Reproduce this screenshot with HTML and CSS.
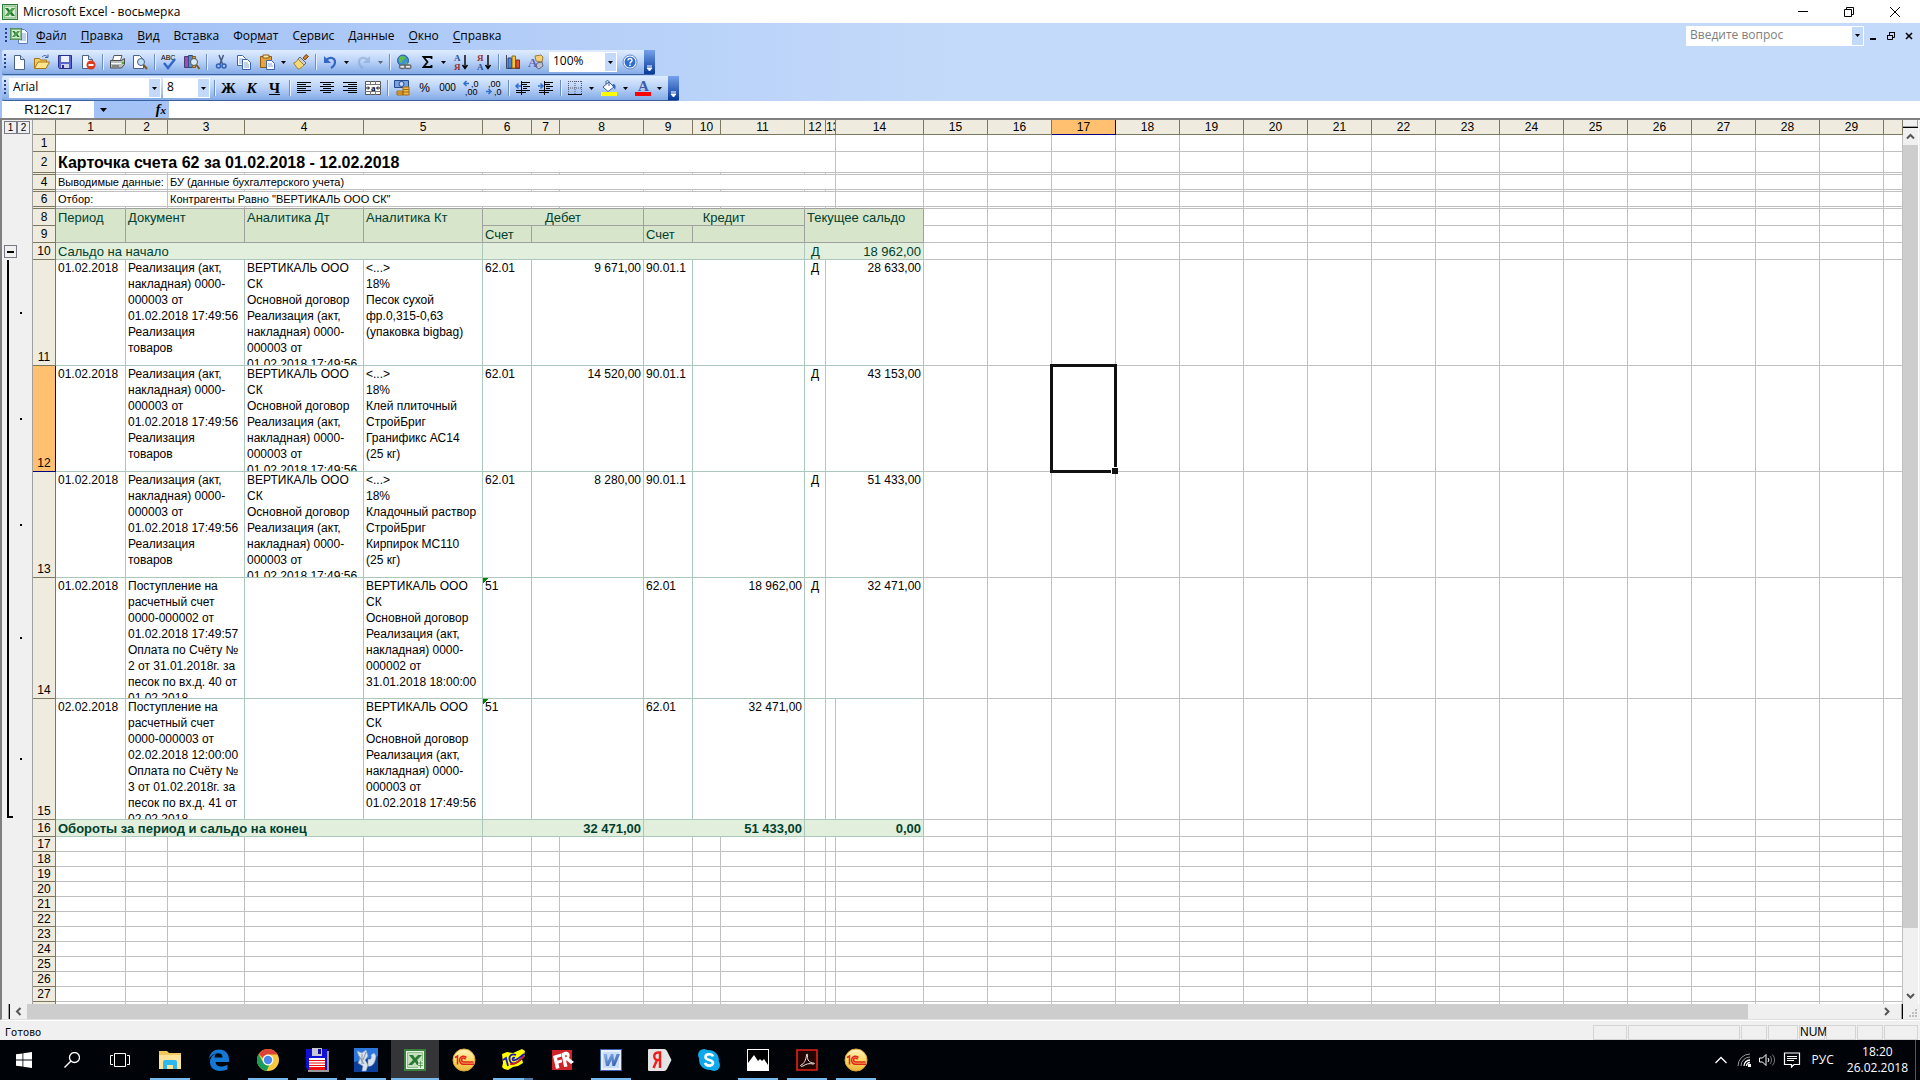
FILE: index.html
```html
<!DOCTYPE html>
<html lang="ru">
<head>
<meta charset="utf-8">
<title>Microsoft Excel - восьмерка</title>
<link rel="stylesheet" href="styles.css">
</head>
<body>
<svg class="defs" aria-hidden="true">
  <defs>
    <linearGradient id="gold" x1="0" y1="0" x2="0" y2="1"><stop offset="0" stop-color="#fff3c0"/><stop offset=".55" stop-color="#fbd75e"/><stop offset="1" stop-color="#e8b43a"/></linearGradient>
    <linearGradient id="blue" x1="0" y1="0" x2="1" y2="1"><stop offset="0" stop-color="#8db6ee"/><stop offset="1" stop-color="#234fa5"/></linearGradient>
    <symbol id="xl" viewBox="0 0 16 16"><rect x=".5" y=".5" width="15" height="15" fill="#f4faf2" stroke="#2c7a38"/><rect x="2" y="2" width="12" height="12" fill="#d5ecd0" stroke="#6aa766"/><path d="M3 4h3l2 2.500 2-2.500h3L9.800 8l3.200 4h-3.200L8 9.700 6.200 12H3l3.200-4z" fill="#1d7a2d"/><path d="M10 4h3L6.200 12H3z" fill="#55a352"/></symbol>
    <symbol id="tri" viewBox="0 0 5 3"><path d="M0 0h5L2.500 3z" fill="currentColor"/></symbol>
    <symbol id="onec" viewBox="0 0 24 24"><circle cx="12" cy="12" r="11" fill="url(#gold)" stroke="#e2a93c"/><path d="M3 9.500 5.500 8v8.500M14.500 9.500a4 4 0 1 0-2.500 6.700h10M13.500 11.500a2 2 0 1 0-2 2.500h10" fill="none" stroke="#e0231c" stroke-width="1.500"/></symbol>
  </defs>
</svg>

<header class="titlebar">
  <svg class="i16" viewBox="0 0 16 16"><use href="#xl"/></svg>
  <h1>Microsoft Excel - восьмерка</h1>
  <div class="winbtns">
    <button aria-label="Свернуть"><svg viewBox="0 0 12 12"><path d="M1 5.500h10" stroke="#000"/></svg></button>
    <button aria-label="Восстановить"><svg viewBox="0 0 12 12"><path d="M1.500 3.500h7v7h-7zM3.500 3.500v-2h7v7h-2" fill="none" stroke="#000"/></svg></button>
    <button aria-label="Закрыть"><svg viewBox="0 0 12 12"><path d="M1 1l10 10M11 1 1 11" stroke="#000"/></svg></button>
  </div>
</header>

<div class="chrome">
  <nav class="menubar">
    <i class="grip"></i>
    <svg class="book" viewBox="0 0 18 16"><path d="M8.500 1.500h6l3 3v11h-9z" fill="#f6f9ff" stroke="#5b7fc0"/><path d="M10 6h6M10 8h6M10 10h6M10 12h6" stroke="#86a6db"/><use href="#xl" x="0" y="0" width="12" height="12"/></svg>
    <a href="#"><u>Ф</u>айл</a><a href="#"><u>П</u>равка</a><a href="#"><u>В</u>ид</a><a href="#">Вст<u>а</u>вка</a><a href="#">Фор<u>м</u>ат</a><a href="#">С<u>е</u>рвис</a><a href="#"><u>Д</u>анные</a><a href="#"><u>О</u>кно</a><a href="#"><u>С</u>правка</a>
    <div class="ask combo"><input aria-label="Введите вопрос" placeholder="Введите вопрос"><button aria-label="Список вопросов"><svg class="tri"><use href="#tri"/></svg></button></div>
    <div class="mdi">
      <button aria-label="Свернуть книгу"><svg viewBox="0 0 10 10"><path d="M2 8h6" stroke="#000" stroke-width="2"/></svg></button>
      <button aria-label="Восстановить книгу"><svg viewBox="0 0 10 10"><path d="M1.500 4.500h5v4h-5zM1 4.500h6M3.500 4V1.500h5v5H7M3 1.500h6" fill="none" stroke="#000"/></svg></button>
      <button aria-label="Закрыть книгу"><svg viewBox="0 0 10 10"><path d="M2 2l6 6M8 2 2 8" stroke="#000" stroke-width="1.600"/></svg></button>
    </div>
  </nav>

  <div class="toolbar">
    <i class="grip"></i>
    <button class="tb" aria-label="Создать"><svg viewBox="0 0 16 16"><path d="M3.500 1.500h6l4 4v10h-10z" fill="#fff" stroke="#4a6285"/><path d="M9.500 1.500v4h4" fill="#cfdcf0" stroke="#4a6285"/></svg></button>
    <button class="tb" aria-label="Открыть"><svg viewBox="0 0 16 16"><path d="M.5 14V4.500h5l1 1.500h6v3" fill="#f6cf61" stroke="#a8741a"/><path d="M.5 14.500 4 8h11.500L12 14.500z" fill="#ffe48f" stroke="#a8741a"/><path d="M8 3c2-2 4-2 5.500 0M14 .5v3h-3" fill="none" stroke="#3a5fa8"/></svg></button>
    <button class="tb" aria-label="Сохранить"><svg viewBox="0 0 16 16"><path d="M1.500 1.500h13v13h-12l-1-1z" fill="#5a63cf" stroke="#2a2f8c"/><path d="M4 2h8v6H4z" fill="#eef2ff"/><path d="M4 10h8v4H4z" fill="#cdd3ee"/><path d="M5 11h2v3H5z" fill="#2a2f8c"/></svg></button>
    <button class="tb" aria-label="Разрешения"><svg viewBox="0 0 16 16"><path d="M2.500 1.500h6l4 4v9h-10z" fill="#fff" stroke="#4a6285"/><path d="M8.500 1.500v4h4" fill="#cfdcf0" stroke="#4a6285"/><circle cx="11" cy="11" r="4.500" fill="#dd3a1c"/><path d="M8.500 11h5" stroke="#fff" stroke-width="2"/></svg></button>
    <i class="sep"></i>
    <button class="tb" aria-label="Печать"><svg viewBox="0 0 16 16"><path d="M5 1.500h8l-1.500 5h-8z" fill="#fff" stroke="#555"/><path d="M1.500 6.500h11l3-2v6l-3 3.500h-11z" fill="#b9bfbc" stroke="#4c4c4c"/><path d="M2 9.500h10" stroke="#fff"/><path d="M3 12h7" stroke="#4c4c4c"/><path d="M13 8h2v2h-2z" fill="#4cae3c"/></svg></button>
    <button class="tb" aria-label="Просмотр"><svg viewBox="0 0 16 16"><path d="M1.500 1.500h6l4 4v9h-10z" fill="#fff" stroke="#4a6285"/><circle cx="9" cy="8" r="3.500" fill="#bfe0f5" stroke="#4a6285"/><path d="M11.500 11l3.500 4" stroke="#7a5a2a" stroke-width="2"/></svg></button>
    <i class="sep"></i>
    <button class="tb" aria-label="Орфография"><svg viewBox="0 0 16 16"><text x="0" y="6" font-size="7" class="svgt">ABC</text><path d="M3 9l4 5 7-9" fill="none" stroke="#3465c8" stroke-width="2.400"/></svg></button>
    <button class="tb" aria-label="Справочные материалы"><svg viewBox="0 0 16 16"><path d="M.5 2.500h4v11h-4z" fill="#a24bb4" stroke="#4b3a74"/><path d="M4.500 1.500h4v12h-4z" fill="#4e8fd0" stroke="#2c4a84"/><path d="M8.500 2.500h3v11h-3z" fill="#e2a534" stroke="#845a1c"/><circle cx="10" cy="8" r="3.500" fill="#d8edf9" stroke="#555"/><path d="M12.500 11l3 4" stroke="#7a5a2a" stroke-width="2"/></svg></button>
    <i class="sep"></i>
    <button class="tb" aria-label="Вырезать"><svg viewBox="0 0 16 16"><path d="M6 1l3.500 9M10.500 1 7 10" stroke="#45587c" stroke-width="1.500"/><circle cx="5.500" cy="12" r="2" fill="none" stroke="#2f5fb8" stroke-width="1.500"/><circle cx="11" cy="12" r="2" fill="none" stroke="#2f5fb8" stroke-width="1.500"/></svg></button>
    <button class="tb" aria-label="Копировать"><svg viewBox="0 0 16 16"><path d="M1.500 1.500h5l3 3v7h-8z" fill="#fff" stroke="#3b62ae"/><path d="M3 5h4M3 7h4M3 9h4" stroke="#86a6db"/><path d="M6.500 5.500h5l3 3v7h-8z" fill="#fff" stroke="#3b62ae"/><path d="M8 9h4M8 11h5M8 13h5" stroke="#86a6db"/></svg></button>
    <button class="tb" aria-label="Вставить"><svg viewBox="0 0 16 16"><path d="M1.500 2.500h11v11h-11z" fill="#e8a33a" stroke="#8d5a16"/><path d="M4 1h6v3H4z" fill="#fbe9a8" stroke="#8d5a16"/><path d="M7.500 6.500h5l3 3v6h-8z" fill="#fff" stroke="#3b62ae"/><path d="M9 10h4M9 12h5" stroke="#86a6db"/></svg></button>
    <button class="drop" aria-label="Параметры вставки"><svg class="tri"><use href="#tri"/></svg></button>
    <button class="tb" aria-label="Формат по образцу"><svg viewBox="0 0 16 16"><path d="M10 4l3-3.500 2.500 2L12 6z" fill="#d07c2a" stroke="#7a4a16"/><path d="M7 3l6 6-2 2-6-6z" fill="#c9cdd6" stroke="#666"/><path d="M5 5l6 6c-2 2-4 4-6 4L.5 9C3 8.500 4 7 5 5z" fill="#f5d878" stroke="#a5802e"/></svg></button>
    <i class="sep"></i>
    <button class="tb" aria-label="Отменить"><svg viewBox="0 0 16 16"><path d="M4 6c4-4 9-2 9 2 0 3-1.500 4.500-4 6" fill="none" stroke="#3465c8" stroke-width="2.200"/><path d="M2 2v7h7z" fill="#3465c8"/></svg></button>
    <button class="drop" aria-label="Список отмены"><svg class="tri"><use href="#tri"/></svg></button>
    <button class="tb dim" aria-label="Вернуть"><svg viewBox="0 0 16 16"><path d="M12 6c-4-4-9-2-9 2 0 3 1.500 4.500 4 6" fill="none" stroke="#7f9ccb" stroke-width="2.200"/><path d="M14 2v7H7z" fill="#7f9ccb"/></svg></button>
    <button class="drop dim" aria-label="Список возврата"><svg class="tri"><use href="#tri"/></svg></button>
    <i class="sep"></i>
    <button class="tb" aria-label="Гиперссылка"><svg viewBox="0 0 16 16"><circle cx="7" cy="6.500" r="5.500" fill="#3f8fd8" stroke="#2a5d9c"/><path d="M3 4c2-3 6-2 6 0S6 6 6 8s-2 1-3-1z" fill="#5fbf3f"/><path d="M9 8l3 1-2 3z" fill="#5fbf3f"/><rect x="3.500" y="11" width="6" height="3.500" rx="1.700" fill="#dfe6ee" stroke="#666" stroke-width="1.400"/><rect x="9" y="11" width="6" height="3.500" rx="1.700" fill="#dfe6ee" stroke="#666" stroke-width="1.400"/></svg></button>
    <button class="tb" aria-label="Автосумма"><svg viewBox="0 0 16 16"><path d="M12.500 5V3H4.500l4 5-4 5h8v-2" fill="none" stroke="#000" stroke-width="1.800"/></svg></button>
    <button class="drop" aria-label="Функции"><svg class="tri"><use href="#tri"/></svg></button>
    <button class="tb" aria-label="Сортировка по возрастанию"><svg viewBox="0 0 16 16"><text x="1" y="7" font-size="9" class="svgb" fill="#2f4f9c">А</text><text x="1" y="16" font-size="9" class="svgb" fill="#9c2f2f">Я</text><path d="M12 1v13M9.500 11l2.500 3.500 2.500-3.500" fill="none" stroke="#000" stroke-width="1.400"/></svg></button>
    <button class="tb" aria-label="Сортировка по убыванию"><svg viewBox="0 0 16 16"><text x="1" y="7" font-size="9" class="svgb" fill="#9c2f2f">Я</text><text x="1" y="16" font-size="9" class="svgb" fill="#2f4f9c">А</text><path d="M12 1v13M9.500 11l2.500 3.500 2.500-3.500" fill="none" stroke="#000" stroke-width="1.400"/></svg></button>
    <i class="sep"></i>
    <button class="tb" aria-label="Диаграмма"><svg viewBox="0 0 16 16"><path d="M1.500 1v13.500H15" fill="none" stroke="#445"/><path d="M3 4h3.500v10H3z" fill="#4f86d8" stroke="#234a8c"/><path d="M7 2h3.500v12H7z" fill="#f5c63c" stroke="#8d6a16"/><path d="M11 6h3.500v8H11z" fill="#e0562c" stroke="#8c2a16"/></svg></button>
    <button class="tb" aria-label="Рисование"><svg viewBox="0 0 16 16"><path d="M7 2l6-1 2 2-1 5-6-1z" fill="#f3cf79" stroke="#9c7a34"/><path d="M9 9l5-1 1 4-4 3-3-2z" fill="#b9c3d4" stroke="#667"/><text x="0" y="13" font-size="13" class="svgb" fill="#5e62b8">A</text></svg></button>
    <div class="combo zoom"><input aria-label="Масштаб" value="100%"><button aria-label="Выбор масштаба"><svg class="tri"><use href="#tri"/></svg></button></div>
    <button class="tb" aria-label="Справка"><svg viewBox="0 0 16 16"><circle cx="8" cy="8" r="7" fill="#fff" stroke="#5d88cc"/><circle cx="8" cy="8" r="5.500" fill="#2f6fd2"/><path d="M6 6.500c0-3 4.200-2.500 4 0C9.900 8 8 7.800 8 9.500M8 10.500V12" fill="none" stroke="#fff" stroke-width="1.500"/></svg></button>
    <button class="cap" aria-label="Параметры панели"><svg viewBox="0 0 7 7"><path d="M1 1h5M1 3h5L3.500 6z" stroke="#fff" fill="#fff"/></svg></button>
  </div>

  <div class="toolbar">
    <i class="grip"></i>
    <div class="combo font"><input aria-label="Шрифт" value="Arial"><button aria-label="Выбор шрифта"><svg class="tri"><use href="#tri"/></svg></button></div>
    <div class="combo size"><input aria-label="Размер" value="8"><button aria-label="Выбор размера"><svg class="tri"><use href="#tri"/></svg></button></div>
    <i class="sep"></i>
    <button class="tb serif"><b>Ж</b></button>
    <button class="tb serif"><b><em>К</em></b></button>
    <button class="tb serif"><b><u>Ч</u></b></button>
    <i class="sep"></i>
    <button class="tb" aria-label="По левому краю"><svg viewBox="0 0 16 16"><path d="M1 2.500h14M1 4.500h9M1 6.500h14M1 8.500h9M1 10.500h14M1 12.500h9" stroke="#000"/></svg></button>
    <button class="tb" aria-label="По центру"><svg viewBox="0 0 16 16"><path d="M1 2.500h14M4 4.500h8M1 6.500h14M4 8.500h8M1 10.500h14M4 12.500h8" stroke="#000"/></svg></button>
    <button class="tb" aria-label="По правому краю"><svg viewBox="0 0 16 16"><path d="M1 2.500h14M6 4.500h9M1 6.500h14M6 8.500h9M1 10.500h14M6 12.500h9" stroke="#000"/></svg></button>
    <button class="tb" aria-label="Объединить"><svg viewBox="0 0 16 16"><path d="M.5 1.500h15v13H.5z" fill="#fff" stroke="#555"/><path d="M0 4.500h16M0 11.500h16M5.500 1v3M10.500 1v3M5.500 12v3M10.500 12v3" stroke="#777"/><path d="M1 8h3M3 6.500 4.500 8 3 9.500M15 8h-3M13 6.500 11.500 8l1.500 1.500" fill="none" stroke="#000"/><text x="6" y="11" font-size="9" class="svgb">a</text></svg></button>
    <i class="sep"></i>
    <button class="tb" aria-label="Денежный формат"><svg viewBox="0 0 16 16"><path d="M.5.500h14v7H.5z" fill="#7ba3e0" stroke="#234a8c"/><circle cx="7.500" cy="4" r="2.500" fill="#c8dafa" stroke="#234a8c"/><path d="M9 7h6v8H9zM3 11h6v4H3z" fill="#f5b83c" stroke="#9c6a16"/><path d="M9 9.500h6M9 12h6M3 13h6" stroke="#9c6a16"/></svg></button>
    <button class="tb fmt">%</button>
    <button class="tb fmt narrow">000</button>
    <button class="tb" aria-label="Увеличить разрядность"><svg viewBox="0 0 16 16"><path d="M1 3.500h5M3.500 1 1 3.500 3.500 6" fill="none" stroke="#2f6fd2" stroke-width="1.500"/><text x="8" y="7" font-size="9" class="svgt">,0</text><text x="2" y="15" font-size="9" class="svgt">,00</text></svg></button>
    <button class="tb" aria-label="Уменьшить разрядность"><svg viewBox="0 0 16 16"><text x="2" y="7" font-size="9" class="svgt">,00</text><path d="M0 11.500h5M2.500 9 5 11.500 2.500 14" fill="none" stroke="#2f6fd2" stroke-width="1.500"/><text x="8" y="15" font-size="9" class="svgt">,0</text></svg></button>
    <i class="sep"></i>
    <button class="tb" aria-label="Уменьшить отступ"><svg viewBox="0 0 16 16"><path d="M7 2.500h8M7 4.500h5M8 6.500h7M8 8.500h4M1 10.500h14M1 12.500h10M6.500 1v14" stroke="#000"/><path d="M1 6h5M3.500 3.500 1 6l2.500 2.500" fill="none" stroke="#2f6fd2" stroke-width="1.500"/></svg></button>
    <button class="tb" aria-label="Увеличить отступ"><svg viewBox="0 0 16 16"><path d="M7 2.500h8M7 4.500h5M8 6.500h7M8 8.500h4M1 10.500h14M1 12.500h10M6.500 1v14" stroke="#000"/><path d="M0 6h5M2.500 3.500 5 6 2.500 8.500" fill="none" stroke="#2f6fd2" stroke-width="1.500"/></svg></button>
    <i class="sep"></i>
    <button class="tb" aria-label="Границы"><svg viewBox="0 0 16 16"><path d="M1.500 1v13M8 1v13M14.500 1v13M1 1.500h14M1 8h14" stroke="#556" stroke-dasharray="1 1"/><path d="M1 14.500h14" stroke="#000"/></svg></button>
    <button class="drop" aria-label="Вид границ"><svg class="tri"><use href="#tri"/></svg></button>
    <button class="tb" aria-label="Цвет заливки"><svg viewBox="0 0 16 16"><path d="M2 7l6-5 5 5-6 4.500z" fill="#fff" stroke="#3f5f8c"/><path d="M8 6V2c0-2-3-2-3 0v2" fill="none" stroke="#3f5f8c"/><path d="M12 4c3 0 3 3 2 6-1-2-1-3-3-4z" fill="#3465c8"/><path d="M0 12h16v4H0z" fill="#ff0"/></svg></button>
    <button class="drop" aria-label="Выбор заливки"><svg class="tri"><use href="#tri"/></svg></button>
    <button class="tb" aria-label="Цвет шрифта"><svg viewBox="0 0 16 16"><text x="3" y="11" font-size="15" class="svgb" fill="#3a5da6">A</text><path d="M0 12h16v4H0z" fill="#f00"/></svg></button>
    <button class="drop" aria-label="Выбор цвета шрифта"><svg class="tri"><use href="#tri"/></svg></button>
    <button class="cap" aria-label="Параметры панели"><svg viewBox="0 0 7 7"><path d="M1 1h5M1 3h5L3.500 6z" stroke="#fff" fill="#fff"/></svg></button>
  </div>

  <div class="formulabar">
    <input class="namebox" aria-label="Имя" value="R12C17">
    <button class="namedrop" aria-label="Список имен"><svg viewBox="0 0 7 4"><path d="M0 0h7L3.500 4z"/></svg></button>
    <button class="fx" aria-label="Вставка функции"><em>f</em><em class="x">x</em></button>
    <input class="formula" aria-label="Строка формул">
  </div>
</div>

<main class="frame">
  <div class="view">
    <table class="sheet">
      <colgroup id="cols"></colgroup>
      <thead><tr id="heads"><td class="gut levels"><div class="pair"><button>1</button><button>2</button></div></td><th class="corner"></th></tr></thead>
      <tbody id="body">
        <tr class="r17"><td class="gut"></td><th>1</th><td colspan="13"></td><td></td></tr>
        <tr class="r21"><td class="gut"></td><th>2</th><td colspan="13" class="name">Карточка счета 62 за 01.02.2018 - 12.02.2018</td><td></td></tr>
        <tr class="thin" data-blank="14"><td class="gut"></td><th></th></tr>
        <tr class="r15"><td class="gut"></td><th>4</th><td colspan="2" class="sm">Выводимые данные:</td><td colspan="11" class="sm">БУ (данные бухгалтерского учета)</td><td></td></tr>
        <tr class="thin" data-blank="14"><td class="gut"></td><th></th></tr>
        <tr class="r15"><td class="gut"></td><th>6</th><td colspan="2" class="sm">Отбор:</td><td colspan="11" class="sm">Контрагенты Равно "ВЕРТИКАЛЬ ООО СК"</td><td></td></tr>
        <tr class="thin pre" data-blank="14"><td class="gut"></td><th></th></tr>
        <tr class="r17"><td class="gut"></td><th>8</th><td class="hd" rowspan="2">Период</td><td class="hd" colspan="2" rowspan="2">Документ</td><td class="hd" rowspan="2">Аналитика Дт</td><td class="hd" rowspan="2">Аналитика Кт</td><td class="hd mid" colspan="3">Дебет</td><td class="hd mid" colspan="3">Кредит</td><td class="hd" colspan="3" rowspan="2">Текущее сальдо</td></tr>
        <tr class="r17"><td class="gut"></td><th>9</th><td class="hd">Счет</td><td class="hd" colspan="2"></td><td class="hd">Счет</td><td class="hd" colspan="2"></td></tr>
        <tr class="r17"><td class="gut fold"><button aria-label="Свернуть группу"></button></td><th>10</th><td class="bal" colspan="5">Сальдо на начало</td><td class="bal" colspan="6"></td><td class="bal mid open">Д</td><td class="bal num" colspan="2">18 962,00</td></tr>
        <tr class="tall"><td class="gut"><div class="rail"></div></td><th>11</th><td class="d">01.02.2018</td><td class="d" colspan="2"><div class="clip">Реализация (акт,<br>накладная) 0000-<br>000003 от<br>01.02.2018 17:49:56<br>Реализация<br>товаров</div></td><td class="d"><div class="clip">ВЕРТИКАЛЬ ООО<br>СК<br>Основной договор<br>Реализация (акт,<br>накладная) 0000-<br>000003 от<br>01.02.2018 17:49:56</div></td><td class="d"><div class="clip">&lt;...&gt;<br>18%<br>Песок сухой<br>фр.0,315-0,63<br>(упаковка bigbag)</div></td><td class="d">62.01</td><td class="d num" colspan="2">9 671,00</td><td class="d">90.01.1</td><td class="d" colspan="2"></td><td class="d mid g">Д</td><td class="d num" colspan="2">28 633,00</td></tr>
        <tr class="tall on" data-select="2"><td class="gut"><div class="rail"></div></td><th>12</th><td class="d">01.02.2018</td><td class="d" colspan="2"><div class="clip">Реализация (акт,<br>накладная) 0000-<br>000003 от<br>01.02.2018 17:49:56<br>Реализация<br>товаров</div></td><td class="d"><div class="clip">ВЕРТИКАЛЬ ООО<br>СК<br>Основной договор<br>Реализация (акт,<br>накладная) 0000-<br>000003 от<br>01.02.2018 17:49:56</div></td><td class="d"><div class="clip">&lt;...&gt;<br>18%<br>Клей плиточный<br>СтройБриг<br>Гранификс АС14<br>(25 кг)</div></td><td class="d">62.01</td><td class="d num" colspan="2">14 520,00</td><td class="d">90.01.1</td><td class="d" colspan="2"></td><td class="d mid g">Д</td><td class="d num" colspan="2">43 153,00</td></tr>
        <tr class="tall"><td class="gut"><div class="rail"></div></td><th>13</th><td class="d">01.02.2018</td><td class="d" colspan="2"><div class="clip">Реализация (акт,<br>накладная) 0000-<br>000003 от<br>01.02.2018 17:49:56<br>Реализация<br>товаров</div></td><td class="d"><div class="clip">ВЕРТИКАЛЬ ООО<br>СК<br>Основной договор<br>Реализация (акт,<br>накладная) 0000-<br>000003 от<br>01.02.2018 17:49:56</div></td><td class="d"><div class="clip">&lt;...&gt;<br>18%<br>Кладочный раствор<br>СтройБриг<br>Кирпирок МС110<br>(25 кг)</div></td><td class="d">62.01</td><td class="d num" colspan="2">8 280,00</td><td class="d">90.01.1</td><td class="d" colspan="2"></td><td class="d mid g">Д</td><td class="d num" colspan="2">51 433,00</td></tr>
        <tr class="tall high"><td class="gut"><div class="rail"></div></td><th>14</th><td class="d">01.02.2018</td><td class="d" colspan="2"><div class="clip">Поступление на<br>расчетный счет<br>0000-000002 от<br>01.02.2018 17:49:57<br>Оплата по Счёту №<br>2 от 31.01.2018г. за<br>песок по вх.д. 40 от<br>01.02.2018</div></td><td class="d"></td><td class="d"><div class="clip">ВЕРТИКАЛЬ ООО<br>СК<br>Основной договор<br>Реализация (акт,<br>накладная) 0000-<br>000002 от<br>31.01.2018 18:00:00</div></td><td class="d flag">51</td><td class="d" colspan="2"></td><td class="d">62.01</td><td class="d num" colspan="2">18 962,00</td><td class="d mid g">Д</td><td class="d num" colspan="2">32 471,00</td></tr>
        <tr class="tall high"><td class="gut"><div class="rail end"></div></td><th>15</th><td class="d">02.02.2018</td><td class="d" colspan="2"><div class="clip">Поступление на<br>расчетный счет<br>0000-000003 от<br>02.02.2018 12:00:00<br>Оплата по Счёту №<br>3 от 01.02.2018г. за<br>песок по вх.д. 41 от<br>02.02.2018</div></td><td class="d"></td><td class="d"><div class="clip">ВЕРТИКАЛЬ ООО<br>СК<br>Основной договор<br>Реализация (акт,<br>накладная) 0000-<br>000003 от<br>01.02.2018 17:49:56</div></td><td class="d flag">51</td><td class="d" colspan="2"></td><td class="d">62.01</td><td class="d num" colspan="2">32 471,00</td><td class="d g"></td><td class="d g"></td><td class="d"></td></tr>
        <tr class="r17 total"><td class="gut"></td><th>16</th><td class="bal" colspan="5">Обороты за период и сальдо на конец</td><td class="bal num" colspan="3">32 471,00</td><td class="bal num" colspan="3">51 433,00</td><td class="bal num" colspan="3">0,00</td></tr>
      </tbody>
    </table>
  </div>
  <div class="vscroll">
    <i class="split"></i>
    <button aria-label="Вверх"><svg viewBox="0 0 9 9"><path d="M1 6.500 4.500 3 8 6.500"/></svg></button>
    <div class="track"><div class="thumb"></div></div>
    <button aria-label="Вниз"><svg viewBox="0 0 9 9"><path d="M1 3 4.500 6.500 8 3"/></svg></button>
  </div>
  <div class="hscroll">
    <i class="split"></i>
    <button aria-label="Влево"><svg viewBox="0 0 9 9"><path d="M6.500 1 3 4.500 6.500 8"/></svg></button>
    <div class="track"><div class="thumb"></div></div>
    <button aria-label="Вправо"><svg viewBox="0 0 9 9"><path d="M3 1l3.500 3.500L3 8"/></svg></button>
    <i class="split"></i>
  </div>
  <svg class="resize" viewBox="0 0 10 10"><path d="M7 0h2v2H7zM7 3h2v2H7zM4 3h2v2H4zM7 6h2v2H7zM4 6h2v2H4zM1 6h2v2H1z" fill="#bdbdbd"/></svg>
</main>

<footer class="status">
  <span class="ready">Готово</span>
  <i class="w34"></i><i class="w112"></i><i class="w26"></i><i class="w30"></i><span class="w26">NUM</span><i class="w30"></i><i class="w26"></i><i class="w34"></i>
</footer>

<nav class="taskbar">
  <button class="sys" aria-label="Пуск"><svg viewBox="0 0 16 16"><path d="M0 2.300 6.500 1.400v6.200H0zM7.300 1.200 16 0v7.600H7.300zM0 8.400h6.500v6.200L0 13.700zM7.300 8.400H16V16l-8.700-1.200z" fill="#fff"/></svg></button>
  <button class="sys" aria-label="Поиск"><svg viewBox="0 0 16 16"><circle cx="10.500" cy="5.500" r="5" fill="none" stroke="#fff" stroke-width="1.300"/><path d="M7 9 .5 15.500" stroke="#fff" stroke-width="1.400"/></svg></button>
  <button class="sys wide" aria-label="Представление задач"><svg viewBox="0 0 20 16"><path d="M4.500 1.500h11v13h-11zM3 3.500H.5v9H3M17 3.500h2.500v9H17" fill="none" stroke="#fff"/></svg></button>
  <div class="apps">
    <button class="run" aria-label="Проводник"><svg viewBox="0 0 24 24"><path d="M1 3h8l2 2h12v16H1z" fill="#f0c75a"/><path d="M1 7h22v14H1z" fill="#fde399"/><path d="M5 21v-7q0-2 2-2h10q2 0 2 2v7h-4v-4H9v4z" fill="#2db7ec"/></svg></button>
    <button aria-label="Edge"><svg viewBox="0 0 24 24"><path d="M2 10.500C3 4.500 7 1.500 12.200 1.500 18.500 1.500 22 6 22 11.500V14H8.500c.2 3 2.500 4.500 5.500 4.500 2.500 0 4.500-.7 6.500-1.800v4.600C18.500 22.400 16 23 13 23c-6 0-10-3.500-10-9 0-4 2.500-7 6-8.500-.9 1.200-1.300 2.400-1.400 4h7.900c0-2.800-1.500-4.300-4.500-4.300-4 0-7 2.300-9 5.300z" fill="#1379d4"/></svg></button>
    <button class="run" aria-label="Chrome"><svg viewBox="0 0 24 24"><circle cx="12" cy="12" r="11" fill="#f7c93c"/><path d="M12 1a11 11 0 0 1 9.600 5.600H12a5.400 5.400 0 0 0-5 3.600L2.800 6A11 11 0 0 1 12 1z" fill="#dc4437"/><path d="M2.600 6.200 7.300 14.500A5.400 5.400 0 0 0 13.400 17l-3 5.900A11 11 0 0 1 2.600 6.200z" fill="#1a9e57"/><circle cx="12" cy="12" r="5.400" fill="#fff"/><circle cx="12" cy="12" r="4.200" fill="#4a87ee"/></svg></button>
    <button class="run" aria-label="Total Commander"><svg viewBox="0 0 24 24"><path d="M3 3h21v21H3z" fill="#999"/><path d="M1 1h21v21H3l-2-2z" fill="#1010d8"/><path d="M7 0h10v8H7z" fill="#c8c8d4"/><path d="M13 1h3v5h-3z" fill="#1010a0"/><path d="M4 10h16v12H4z" fill="#fff"/><path d="M4 12.500h16M4 15h16M4 17.500h16" stroke="#e11" stroke-width="1.200"/><path d="M4 19h16v3H4z" fill="#e11"/></svg></button>
    <button class="run" aria-label="Приложение"><svg viewBox="0 0 24 24"><path d="M0 0h24v24H0z" fill="#0c3f9c"/><path d="M0 0h24v8L0 14z" fill="#2c77dc"/><path d="M3 3l5 2 4-3 2 6-3 4 3 5-2 6H8l1-5-5-3 2-4zM14 11c3 1 4-1 3-4l3-2 2 3c-1 8-4 11-8 10z" fill="#d9e3ec" stroke="#8ba3bd" stroke-width=".6"/><path d="M8 6v10M5 8l5 8M12 4l-3 8" stroke="#66788c" stroke-width=".7"/></svg></button>
    <button class="active" aria-label="Excel"><svg viewBox="0 0 24 24"><path d="M2 2h20v20H2z" fill="#e7f2e3" stroke="#3c7f3f" stroke-width="2"/><path d="M4.500 4.500h15v15h-15z" fill="#c4dfbe" stroke="#8fbf8a"/><path d="M6 7h4l2 3 3-3h4l-5 5 4 5h-4l-2-3-3 3H5l5-5z" fill="#2b7a33"/><path d="M15 13h5v7h-5z" fill="#d7ead2"/><path d="M15 15h5M15 17.500h5M17.500 13v7" stroke="#3c7f3f" stroke-width=".7"/></svg></button>
    <button aria-label="1С"><svg viewBox="0 0 24 24"><use href="#onec"/></svg></button>
    <button class="run two" aria-label="1С Предприятие"><svg viewBox="0 0 24 24"><path d="M1 6l5-2 6 1 9-4 3 2-1 4 1 1-3 3 1 4-5 3-5 1-5 3-4-1-2-2 1-4z" fill="#ff0"/><path d="M2 12l3-2 2 8M15 7c-4-2-8 1-6 6s8 2 14-5M14 10c-2-1-3 1-2 2s4 0 11-6" fill="none" stroke="#1616c8" stroke-width="1.800"/><path d="M9 16c5 1 9-2 14-8" stroke="#e11" stroke-width="1.500" fill="none"/></svg></button>
    <button aria-label="FineReader"><svg viewBox="0 0 24 24"><path d="M2 2h20v20H2z" fill="#cf2229"/><path d="M3 8l8-2.500.7 3L7 10l.6 2.500 4-1 .6 2.800-3.800 1.200L9.500 20l-3.500 1z" fill="#fff"/><path d="M11.500 5.500c5-4 10-1 7.500 4.500l5 4-3 2-5-4 1.500 6.500-3.500.5z" fill="#fff"/><path d="M15 7.500c2-1 3 1 .5 2z" fill="#cf2229"/></svg></button>
    <button class="run" aria-label="Word"><svg viewBox="0 0 24 24"><path d="M1.500 1.500h21v21h-21z" fill="#e9f0fb" stroke="#3a62ae"/><path d="M4 4h16v16H4z" fill="#c9dcf7"/><path d="M4.500 6h3.500l.7 7 3.300-7h2.300l.7 7 2.500-7H21l-5 12h-2.600l-.8-6-2.900 6H7z" fill="url(#blue)"/></svg></button>
    <button aria-label="Яндекс"><svg viewBox="0 0 24 24"><path d="M1 1h15q2 0 3 2l4.500 9L19 21q-1 2-3 2H1q-1 0-1-1V2q0-1 1-1z" fill="#e4e4e4"/><path d="M12 20V4.500h-2c-5 0-5 7.500 0 7.500H12M9 12 5.500 20" fill="none" stroke="#f01c1c" stroke-width="2.400"/></svg></button>
    <button aria-label="Skype"><svg viewBox="0 0 24 24"><circle cx="12" cy="12" r="10" fill="#0fa8ea"/><circle cx="7" cy="7" r="6" fill="#0fa8ea"/><circle cx="17" cy="17" r="6" fill="#0fa8ea"/><path d="M16 8.500C15 5.500 8.500 5.500 8.500 9c0 4 7.500 2 7.500 6 0 3.500-7 3.500-8-.2" fill="none" stroke="#fff" stroke-width="2.600"/></svg></button>
    <button class="run" aria-label="Фотографии"><svg viewBox="0 0 24 24"><path d="M1 1h22v22H1z" fill="#fff"/><path d="M2 2h20v15l-4-6-2 2-2-2-2 2-4-6-6 8z" fill="#000"/></svg></button>
    <button class="run" aria-label="Acrobat"><svg viewBox="0 0 24 24"><path d="M2 2h20v20H2z" fill="#230504" stroke="#e2231a" stroke-width="1.600"/><path d="M6 17c3-1 5-5 5.500-10 .2-2 1.500-1 1 1-.5 4 2 7 6 7 1.500 0 1 1.300-.5 1-4-1-7 0-10 2-2 1-3-.3-2-1z" fill="none" stroke="#e8e8e8"/></svg></button>
    <button class="run" aria-label="1С"><svg viewBox="0 0 24 24"><use href="#onec"/></svg></button>
  </div>
  <div class="tray">
    <svg class="t14" viewBox="0 0 14 14"><path d="M1.500 10 7 4.500l5.500 5.500" fill="none" stroke="#fff" stroke-width="1.300"/></svg>
    <svg class="t14" viewBox="0 0 14 14"><path d="M1 13A12 12 0 0 1 13 1M4 13a9 9 0 0 1 9-9" fill="none" stroke="#999"/><path d="M7 13a6 6 0 0 1 6-6M9.500 13A3.500 3.500 0 0 1 13 9.500" fill="none" stroke="#fff" stroke-width="1.300"/><path d="M11 11h3v3h-3z" fill="#fff"/></svg>
    <svg class="t18" viewBox="0 0 18 14"><path d="M1.500 5h3l3.500-3.500v11L4.500 9h-3z" fill="none" stroke="#fff"/><path d="M10 5a3 3 0 0 1 0 4" fill="none" stroke="#fff"/><path d="M12 3a6 6 0 0 1 0 8M14.500 1.500a9 9 0 0 1 0 11" fill="none" stroke="#777"/></svg>
    <svg class="t18" viewBox="0 0 18 16"><path d="M1.500 1h15v11.500H11L8.500 15v-2.500h-7zM4 4.500h10M4 6.500h10M4 8.500h7" fill="none" stroke="#fff" stroke-width="1.200"/></svg>
    <span class="lang">РУС</span>
    <time class="clock">18:20<br>26.02.2018</time>
    <i class="desk"></i>
  </div>
</nav>
<script src="sheet.js"></script>
</body>
</html>
```

FILE: styles.css
```css
* { box-sizing: border-box; }
html, body { height: 100%; margin: 0; }
body { display: flex; flex-direction: column; overflow: hidden; background: #fff; font: 12px/16px "Open Sans", "Noto Sans", sans-serif; color: #000; }
button, input { font: inherit; color: inherit; margin: 0; padding: 0; border: 0; background: none; border-radius: 0; }
button { display: flex; align-items: center; justify-content: center; flex: none; }
input { min-width: 0; outline: 0; }
.defs { position: absolute; width: 0; height: 0; }
svg { display: block; flex: none; }
svg text.svgt { font-family: "Liberation Sans", sans-serif; }
svg text.svgb { font-family: "Liberation Serif", serif; font-weight: bold; }

.titlebar { display: flex; align-items: center; height: 23px; padding-left: 2px; flex: none; }
.titlebar h1 { margin: 0 0 0 5px; font-size: 12px; font-weight: 400; }
.i16 { width: 16px; height: 16px; }
.winbtns { display: flex; margin-left: auto; padding-right: 2px; }
.winbtns button { width: 46px; height: 20px; }
.winbtns svg { width: 12px; height: 12px; }

.chrome { flex: none; background: linear-gradient(90deg, #9ebef5, #c4dafa 50%); }
.menubar { display: flex; align-items: center; height: 27px; padding: 0 0 2px 5px; }
.book { width: 18px; height: 16px; margin: 0 1px 0 2px; }
.menubar a { color: #000; text-decoration: none; padding: 0 7px; }
.menubar u { text-underline-offset: 2px; }
.grip { width: 3px; height: 16px; flex: none; background: repeating-linear-gradient(#27418f 0 2px, transparent 2px 4px) 0 0 / 2px 100% no-repeat; }

.tri { width: 5px; height: 3px; }
.combo { display: flex; background: #fff; border: 1px solid #fff; height: 20px; }
.combo input { flex: 1; padding-left: 3px; line-height: 16px; height: 16px; }
.combo button { width: 11px; background: #c3d9fa; }
.ask { margin-left: auto; width: 178px; }
.ask input::placeholder { color: #808080; opacity: 1; }
.mdi { display: flex; padding-right: 2px; }
.mdi button { width: 18px; height: 18px; }
.mdi svg { width: 10px; height: 10px; }

.toolbar { display: flex; align-items: center; width: max-content; height: 25px; margin: 0 0 0 2px; padding-left: 2px; border-bottom: 1px solid #3b619c; border-radius: 2px; background: linear-gradient(#dfecff, #bcd4f8 45%, #83aae6); }
.toolbar + .toolbar { margin-top: 1px; }
.tb { width: 23px; height: 22px; }
.tb svg { width: 16px; height: 16px; overflow: visible; }
.dim { opacity: .5; }
.drop { width: 11px; height: 22px; }
.sep { flex: none; width: 1px; height: 16px; margin: 0 2px 0 3px; background: #6a8ccb; box-shadow: 1px 0 #e8f1ff; }
.zoom { width: 68px; margin: 0 1px 0 2px; }
.font { width: 152px; margin-left: 2px; }
.size { width: 47px; margin: 0 1px 0 2px; }
.serif { font: 15px/20px "Liberation Serif", serif; }
.fmt { font: 12px/16px "Liberation Sans", sans-serif; }
.narrow { font-size: 10px; }
.cap { width: 11px; align-self: stretch; align-items: flex-end; margin-left: 3px; background: linear-gradient(#76a1ec, #06399a); }
.cap svg { width: 7px; height: 7px; margin-bottom: 2px; }

.formulabar { display: flex; height: 17px; padding-left: 2px; }
.namebox { width: 92px; text-align: center; background: #fff; font: 13px/16px "Liberation Sans", sans-serif; }
.namedrop { width: 19px; }
.namedrop svg { width: 7px; height: 4px; }
.fx { width: 56px; justify-content: flex-end; padding-right: 3px; font: bold 14px/16px "Liberation Serif", serif; }
.fx .x { font-size: 11px; }
.formula { flex: 1; background: #fff; }

.frame { flex: 1; min-height: 0; display: grid; grid-template: minmax(0, 1fr) 15px / minmax(0, 1fr) 17px; border: solid; border-width: 2px 0 1px 2px; border-color: #808080 #fff #e0e0e0 #808080; background: #f0f0f0; }
.view { overflow: hidden; background: #fff; }
.sheet { width: 100%; table-layout: fixed; border-collapse: separate; border-spacing: 0; font: 12px/16px "Liberation Sans", sans-serif; }
.sheet td, .sheet th { padding: 0 2px; border: solid #c0c0c0; border-width: 0 1px 1px 0; vertical-align: top; text-align: left; white-space: nowrap; }
.sheet th { padding: 0; overflow: hidden; border-color: #7c7960; background: #efebde; font-weight: 400; text-align: center; vertical-align: bottom; }
.sheet thead th { line-height: 14px; }
.sheet .sel, .sheet .on th { background: #ffc06f; border-color: #000080; }
.sheet td.gut { padding: 0; border-width: 0 1px 0 0; border-color: #a0a0a0; background: #f0f0f0; }
.r15 { height: 15px; line-height: 14px; }
.r17 { height: 17px; }
.r21 { height: 21px; line-height: 20px; }
.thin { height: 2px; line-height: 0; font-size: 0; }
.pre td:not(.gut):nth-child(-n+16) { border-bottom-color: #a0a0a0; }
.sheet td.name { padding-top: 1px; font-size: 16px; line-height: 19px; font-weight: 700; }
.sheet td.sm { font-size: 11px; }
.sheet td.hd, .sheet td.bal { padding-top: 1px; color: #003f2f; font-size: 13px; line-height: 15px; }
.sheet td.hd { background: #d7e5cb; border-color: #a0a0a0; }
.sheet td.bal { background: #e2efdc; border-color: #acc8bd; }
.sheet td.open { border-right: 0; }
.sheet td.d { border-color: #acc8bd; }
.sheet td.g { border-right-color: #c0c0c0; }
.sheet td.mid { text-align: center; }
.sheet td.num { text-align: right; }
.total td { font-weight: 700; }
.tall { height: 106px; }
.high { height: 121px; }
.clip { height: 105px; overflow: hidden; }
.high .clip { height: 120px; }
.flag { background: linear-gradient(135deg, #008000 4px, transparent 4px) no-repeat; }
.picked { position: relative; }
.picked::before { content: ""; position: absolute; inset: -2px; border: 3px solid #111; }
.picked::after { content: ""; position: absolute; right: -3px; bottom: -3px; width: 6px; height: 6px; background: #111; border: solid #fff; border-width: 1px 0 0 1px; }

.pair { display: flex; height: 14px; padding: 1px 0 0 2px; }
.pair button { width: 13px; height: 13px; border: 1px solid #7a7a86; background: #f0f0f0; font-size: 10px; line-height: 11px; }
.fold button { width: 13px; height: 13px; margin: 2px 0 0 2px; border: 1px solid #7a7a86; background: linear-gradient(#000, #000) center / 7px 2px no-repeat #f0f0f0; }
.rail { height: 106px; margin-left: 5px; border-left: 2px solid #000; background: linear-gradient(#000, #000) 11px 52px / 2px 2px no-repeat; }
.high .rail { height: 121px; background-position: 11px 59px; }
.high .rail.end { height: 119px; background: linear-gradient(#000, #000) 0 100% / 4px 2px no-repeat, linear-gradient(#000, #000) 11px 59px / 2px 2px no-repeat; }

.vscroll { display: flex; flex-direction: column; width: 16px; border-right: 1px solid #fff; }
.vscroll .split { height: 8px; border-bottom: 1px solid #000; box-shadow: inset -1px -1px #a0a0a0; }
.vscroll button { height: 17px; }
.track { flex: 1; }
.thumb { background: #cdcdcd; }
.vscroll .thumb { height: 93%; }
.vscroll svg, .hscroll svg { width: 9px; height: 9px; fill: none; stroke: #555; stroke-width: 2; }
.hscroll { display: flex; }
.hscroll .split { width: 8px; border-right: 1px solid #000; box-shadow: inset -1px 0 #a0a0a0; }
.hscroll button { width: 17px; }
.hscroll .thumb { width: 93%; height: 15px; }
.resize { width: 10px; height: 10px; place-self: end; margin: 0 2px 0 0; }

.status { display: flex; align-items: center; gap: 1px; height: 20px; flex: none; padding: 3px 2px 0 5px; border-top: 1px solid #fff; background: #f0f0f0; font: 10px/15px "DejaVu Sans", sans-serif; }
.ready { margin-right: auto; }
.status i, .status .w26 { height: 15px; border: 1px solid #d4d4d4; }
.status .w26 { width: 26px; font: 12px/13px "Liberation Sans", sans-serif; text-align: center; white-space: nowrap; }
.w30 { width: 30px; }
.w34 { width: 34px; }
.w112 { width: 112px; }

.taskbar { display: flex; flex: none; height: 40px; background: #000307; color: #fff; }
.taskbar button { width: 48px; height: 40px; }
.sys svg { width: 16px; height: 16px; }
.taskbar .wide svg { width: 20px; }
.apps { display: flex; gap: 1px; margin-left: 2px; }
.apps svg { width: 24px; height: 24px; }
.run { background: linear-gradient(#76b9ed, #76b9ed) center bottom / 40px 2px no-repeat; }
.apps .two { background: linear-gradient(90deg, #76b9ed 31px, #4a7aa3 31px) center bottom / 40px 2px no-repeat; }
.apps .active { background: linear-gradient(#76b9ed, #76b9ed) center bottom / 100% 2px no-repeat #333538; }
.tray { display: flex; align-items: center; margin-left: auto; gap: 7px; }
.t14 { width: 14px; height: 14px; }
.t14:first-child { margin-right: 2px; }
.t18 { width: 18px; height: 16px; }
.lang { margin-left: 4px; }
.clock { margin-left: 6px; text-align: center; }
.desk { width: 5px; height: 40px; border-left: 1px solid #555; }
```

FILE: sheet.js
```js
// Column widths in pixels, right grid line included; the last column takes the rest.
const widths = [31, 23, 70, 42, 77, 119, 119, 49, 28, 84, 49, 28, 84, 21, 10, 88].concat(Array(15).fill(64));
const SPARE = 16;
const activeColumn = 17;

const cols = document.getElementById('cols');
widths.forEach(w => {
  const col = document.createElement('col');
  col.style.width = w + 'px';
  cols.append(col);
});
cols.append(document.createElement('col'));

const heads = document.getElementById('heads');
for (let n = 1; n <= 30; n++) {
  const th = document.createElement('th');
  if (n < 30) th.textContent = n;
  if (n === activeColumn) th.className = 'sel';
  heads.append(th);
}

const addCells = (row, count) => {
  for (let i = 0; i < count; i++) row.insertCell();
};

const body = document.getElementById('body');
for (const row of [...body.rows]) {
  addCells(row, Number(row.dataset.blank || 0));
  const start = row.cells.length;
  addCells(row, SPARE);
  if (row.dataset.select) row.cells[start + Number(row.dataset.select)].className = 'picked';
}

for (let n = 17; n <= 28; n++) {
  const row = body.insertRow();
  row.className = 'r15';
  row.insertCell().className = 'gut';
  const th = document.createElement('th');
  if (n < 28) th.textContent = n;
  row.append(th);
  addCells(row, 14 + SPARE);
}
```
